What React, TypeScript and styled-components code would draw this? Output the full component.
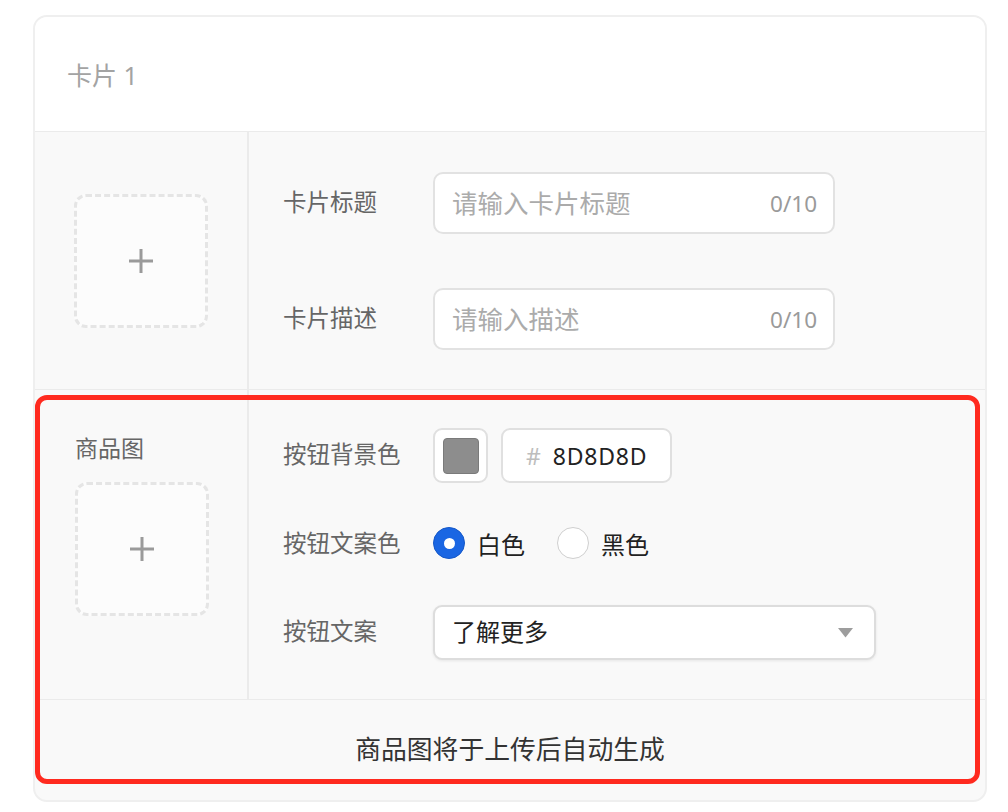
import React from "react";
import styled, { createGlobalStyle } from "styled-components";

/* Card editor: title/description inputs, product image block with button colour settings. */

const Global = createGlobalStyle`
  html, body {
    margin: 0;
    background: #ffffff;
  }
  body {
    font-family: "Noto Sans", "Noto Sans CJK SC", sans-serif;
  }
  * {
    box-sizing: border-box;
  }
`;

const Page = styled.div`
  padding: 15px 0 0 33px;
`;

const Card = styled.div`
  width: 954px;
  border: 2px solid #efefef;
  border-radius: 14px;
  overflow: hidden;
  background: #f9f9f9;
  display: flex;
  flex-direction: column;
`;

const Header = styled.div`
  height: 115px;
  display: flex;
  align-items: center;
  padding-left: 32px;
  background: #ffffff;
  border-bottom: 1px solid #ebebeb;
  font-size: 25px;
  color: #a3a3a3;
`;

const Section = styled.div`
  display: grid;
  grid-template-columns: 214px 1fr;
  border-bottom: 1px solid #ebebeb;
`;

const SideCol = styled.div<{ $centered?: boolean }>`
  border-right: 2px solid #ebebeb;
  display: flex;
  flex-direction: column;
  align-items: ${(p) => (p.$centered ? "center" : "flex-start")};
  justify-content: ${(p) => (p.$centered ? "center" : "flex-start")};
  padding: ${(p) => (p.$centered ? "0" : "42px 0 0 40px")};
`;

const SideLabel = styled.div`
  font-size: 23px;
  line-height: 32px;
  color: #666666;
  margin-bottom: 18px;
`;

const Upload = styled.div`
  width: 134px;
  height: 134px;
  border: 3px dashed #e5e5e5;
  border-radius: 12px;
  background: #fcfcfc;
  display: flex;
  align-items: center;
  justify-content: center;
`;

const Fields = styled.div<{ $gap: number; $pad: string }>`
  display: flex;
  flex-direction: column;
  gap: ${(p) => p.$gap}px;
  padding: ${(p) => p.$pad};
`;

const Row = styled.div<{ $h: number }>`
  display: flex;
  align-items: center;
  height: ${(p) => p.$h}px;
`;

const Label = styled.div`
  width: 150px;
  flex: none;
  font-size: 23.5px;
  color: #666666;
  padding-bottom: 5px;
`;

const InputBox = styled.div`
  width: 402px;
  height: 62px;
  border: 2px solid #e2e2e2;
  border-radius: 10px;
  background: #ffffff;
  display: flex;
  align-items: center;
  padding: 0 16px 0 17px;
`;

const Input = styled.input`
  flex: 1;
  min-width: 0;
  border: none;
  outline: none;
  background: transparent;
  padding: 0;
  font-family: "Noto Sans", "Noto Sans CJK SC", sans-serif;
  font-size: 25.5px;
  color: #333333;

  &::placeholder {
    color: #ababab;
  }
`;

const Counter = styled.span`
  font-size: 22.5px;
  color: #9a9a9a;
`;

const SwatchBox = styled.div`
  width: 55px;
  height: 55px;
  border: 2px solid #e0e0e0;
  border-radius: 9px;
  background: #ffffff;
  display: flex;
  align-items: center;
  justify-content: center;
`;

const Swatch = styled.div<{ $color: string }>`
  width: 36px;
  height: 36px;
  border-radius: 4px;
  background: ${(p) => p.$color};
  border: 1px solid #7a7a7a;
`;

const HexBox = styled.div`
  margin-left: 13px;
  width: 171px;
  height: 55px;
  border: 2px solid #e0e0e0;
  border-radius: 9px;
  background: #ffffff;
  display: flex;
  align-items: center;
  padding-left: 23px;
  font-size: 23px;
  color: #222222;
  letter-spacing: 0.8px;
`;

const Hash = styled.span`
  color: #bdbdbd;
  margin-right: 11px;
`;

const RadioGroup = styled.div`
  display: flex;
  align-items: center;
  gap: 32px;
`;

const RadioItem = styled.label`
  display: flex;
  align-items: center;
  gap: 12px;
  font-size: 24px;
  color: #222222;
  padding-bottom: 2px;
`;

const RadioDot = styled.span<{ $checked?: boolean }>`
  width: 32px;
  height: 32px;
  border-radius: 50%;
  flex: none;
  background: ${(p) => (p.$checked ? "#1a66e3" : "#ffffff")};
  border: ${(p) => (p.$checked ? "1px solid #1558c8" : "1.5px solid #cfcfcf")};
  display: flex;
  align-items: center;
  justify-content: center;

  &::after {
    content: "";
    display: ${(p) => (p.$checked ? "block" : "none")};
    width: 11px;
    height: 11px;
    border-radius: 50%;
    background: #ffffff;
  }
`;

const Select = styled.div`
  width: 443px;
  height: 55px;
  border: 2px solid #dddddd;
  border-radius: 9px;
  background: #ffffff;
  box-shadow: 0 1px 3px rgba(0, 0, 0, 0.08);
  display: flex;
  align-items: center;
  justify-content: space-between;
  padding: 0 21px 4px 17px;
  font-size: 24px;
  color: #222222;

  svg {
    margin-top: 4px;
  }
`;

const Highlighted = styled.div`
  position: relative;
`;

const Footer = styled.div`
  height: 100px;
  display: flex;
  align-items: center;
  justify-content: center;
  padding-bottom: 5px;
  font-size: 25.8px;
  color: #333333;
`;

const Marker = styled.div`
  position: absolute;
  top: 5px;
  left: 0;
  right: 5px;
  bottom: 16px;
  border: 5px solid #ff2a1f;
  border-radius: 12px;
  pointer-events: none;
`;

function Plus() {
  return (
    <svg width="26" height="26" viewBox="0 0 26 26">
      <path d="M13 1v24M1 13h24" stroke="#9a9a9a" strokeWidth="3" fill="none" />
    </svg>
  );
}

function Caret() {
  return (
    <svg width="15" height="10" viewBox="0 0 15 10">
      <path d="M0 0h15L7.5 9.5z" fill="#9d9d9d" />
    </svg>
  );
}

function TextField({ placeholder }: { placeholder: string }) {
  return (
    <InputBox>
      <Input placeholder={placeholder} />
      <Counter>0/10</Counter>
    </InputBox>
  );
}

export default function App() {
  return (
    <Page>
      <Global />
      <Card>
        <Header>卡片 1</Header>

        <Section style={{ height: 258 }}>
          <SideCol $centered>
            <Upload>
              <Plus />
            </Upload>
          </SideCol>
          <Fields $gap={54} $pad="40px 0 0 34px">
            <Row $h={62}>
              <Label>卡片标题</Label>
              <TextField placeholder="请输入卡片标题" />
            </Row>
            <Row $h={62}>
              <Label>卡片描述</Label>
              <TextField placeholder="请输入描述" />
            </Row>
          </Fields>
        </Section>

        <Highlighted>
          <Section>
            <SideCol>
              <SideLabel>商品图</SideLabel>
              <Upload>
                <Plus />
              </Upload>
            </SideCol>
            <Fields $gap={34} $pad="38px 0 39px 34px">
              <Row $h={55}>
                <Label>按钮背景色</Label>
                <SwatchBox>
                  <Swatch $color="#8d8d8d" />
                </SwatchBox>
                <HexBox>
                  <Hash>#</Hash>8D8D8D
                </HexBox>
              </Row>
              <Row $h={54}>
                <Label>按钮文案色</Label>
                <RadioGroup>
                  <RadioItem>
                    <RadioDot $checked />
                    白色
                  </RadioItem>
                  <RadioItem>
                    <RadioDot />
                    黑色
                  </RadioItem>
                </RadioGroup>
              </Row>
              <Row $h={55}>
                <Label>按钮文案</Label>
                <Select>
                  了解更多
                  <Caret />
                </Select>
              </Row>
            </Fields>
          </Section>
          <Footer>商品图将于上传后自动生成</Footer>
          <Marker />
        </Highlighted>
      </Card>
    </Page>
  );
}
